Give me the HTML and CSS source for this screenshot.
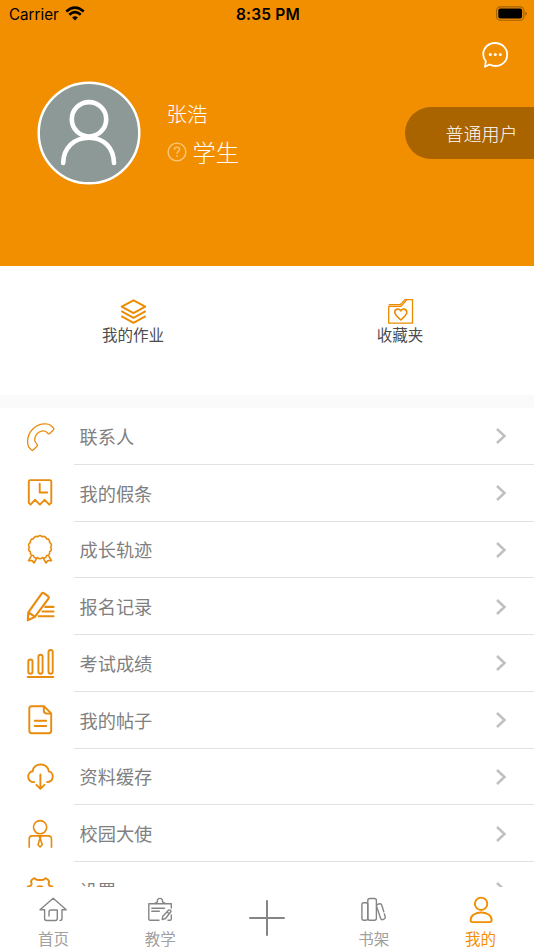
FILE: index.html
```html
<!DOCTYPE html>
<html lang="zh-CN">
<head>
<meta charset="utf-8">
<title>我的</title>
<link rel="stylesheet" href="styles.css">
</head>
<body>
<svg class="defs" width="0" height="0"><symbol id="chevron" viewBox="0 0 12 18"><path d="M2 2 9.500 9 2 16"/></symbol></svg>
<div class="screen">
  <header class="hero">
    <div class="status">
      <div class="carrier">Carrier
        <svg class="wifi" width="20" height="15" viewBox="0 0 20 15"><path d="M10 14.400 7.100 11.500Q10 8.900 12.900 11.500Z" fill="#000"/><path d="M4.300 8.800Q10 3.600 15.700 8.800M1.300 5.500Q10 -2.200 18.700 5.500" fill="none" stroke="#000" stroke-width="2.700"/></svg>
      </div>
      <div class="clock">8:35 PM</div>
      <svg class="battery" width="32" height="16" viewBox="0 0 32 16"><rect x=".6" y=".9" width="27.300" height="13.400" rx="3.800" fill="none" stroke="#a06000" stroke-width="1.100"/><rect x="2.300" y="2.600" width="23.800" height="10" rx="2" fill="#000"/><path d="M29.300 5.200q3 2.400 0 4.800z" fill="#a06000"/></svg>
    </div>
    <div class="tools">
      <svg width="28" height="28" viewBox="0 0 28 28" fill="none" stroke="#fff" stroke-width="1.800" stroke-linejoin="round"><path d="M4.800 20.300C-1.200 12.200 4.300 2 14 2c7 0 12.200 5.300 12.200 11.600C26.200 22.500 17 27.600 8.500 23.500L4 25.800Z"/><g fill="#fff" stroke="none"><circle cx="9.300" cy="13.500" r="1.500"/><circle cx="14.300" cy="13.500" r="1.500"/><circle cx="19.300" cy="13.500" r="1.500"/></g></svg>
    </div>
    <div class="profile">
      <svg class="avatar" width="104" height="104" viewBox="0 0 104 104"><circle cx="52" cy="52" r="50.300" fill="#8c9996" stroke="#fff" stroke-width="2.500"/><g fill="none" stroke="#fff" stroke-width="4.600" stroke-linecap="round"><circle cx="52" cy="38.300" r="17.200"/><path d="M26.200 82C26.500 67 37 56.700 52 56.700S76.500 67 77 82"/></g></svg>
      <div class="who">
        <div class="name">张浩</div>
        <div class="role">
          <svg width="20" height="20" viewBox="0 0 20 20" fill="none" stroke="#fbc779" stroke-width="1.400"><circle cx="10" cy="10" r="8.900"/><path d="M7.400 7.800C7.400 4.200 12.800 4.400 12.500 7.600C12.400 9.300 10 9.500 10 11.800M10 13.300v1.700"/></svg>
          <span>学生</span>
        </div>
      </div>
      <div class="level">普通用户</div>
    </div>
  </header>

  <section class="shortcuts">
    <div class="shortcut">
      <svg width="28" height="28" viewBox="0 0 28 28" fill="none" stroke="#ed8b00" stroke-width="1.900" stroke-linejoin="round"><path d="M14 2.300 25.800 8.700 14 15.100 2.200 8.700ZM1.800 13.200 14 19.800 26.200 13.200M1.800 18.200 14 24.900 26.200 18.200"/></svg>
      <span>我的作业</span>
    </div>
    <div class="shortcut">
      <svg width="28" height="28" viewBox="0 0 28 28" fill="none" stroke="#ed8b00" stroke-width="1.300" stroke-linejoin="round"><path d="M2.200 8.300H14.500L20.500 1.600H26V25.200H2.200ZM2.200 6.600H13.700L18.500 1.600H20.500"/><path d="M14.300 22C11 19.200 8.300 16.700 8.300 14.300C8.300 10.500 12.800 10 14.300 13C15.800 10 20.300 10.500 20.300 14.300C20.300 16.700 17.600 19.200 14.300 22Z" stroke-width="1.600"/></svg>
      <span>收藏夹</span>
    </div>
  </section>

  <main class="list">
    <div class="row"><svg class="icon thin" viewBox="0 0 32 32"><path d="M3.600 20.500C4 11.500 12 3.500 21.500 3.900Q25 4 26.500 5.200L29.700 8.300Q30.200 9 29.300 10L26 13.300Q25 14.300 24 13.500C22.300 11.300 20 10.500 17.500 11.100C13.500 12 10.600 15.800 10.700 20Q10.700 22.300 13 24.200Q14 25.300 13 26.300L9.200 30Q8.300 31 7.300 29.900L4.500 26.800Q3.500 25 3.600 20.500Z"/></svg><div class="cell">联系人<svg class="chevron"><use href="#chevron"/></svg></div></div>
    <div class="row"><svg class="icon" viewBox="0 0 32 32"><path d="M6.200 4.100H25.800Q27.300 4.100 27.300 5.600V26.800L25.300 28.600 20.600 23.800 15.900 28.600 11 23.800 6.500 28.600 4.800 26.800V5.600Q4.800 4.100 6.200 4.100ZM15.700 7.700V16.500H23.200"/></svg><div class="cell">我的假条<svg class="chevron"><use href="#chevron"/></svg></div></div>
    <div class="row"><svg class="icon medium" viewBox="0 0 32 32"><path d="M13.640 3.870A2.800 2.800 0 0 1 18.360 3.870A2.800 2.800 0 0 1 22.610 5.910A2.800 2.800 0 0 1 25.550 9.600A2.800 2.800 0 0 1 26.600 14.200A2.800 2.800 0 0 1 25.550 18.800A2.800 2.800 0 0 1 22.610 22.490A2.800 2.800 0 0 1 18.360 24.530A2.800 2.800 0 0 1 13.640 24.530A2.800 2.800 0 0 1 9.390 22.490A2.800 2.800 0 0 1 6.450 18.800A2.800 2.800 0 0 1 5.400 14.200A2.800 2.800 0 0 1 6.450 9.600A2.800 2.800 0 0 1 9.390 5.910A2.800 2.800 0 0 1 13.640 3.870Z"/><path d="M7 23.500 4.500 27.600 8 27.600 10 30 12.300 25.800M25 23.500 27.500 27.600 24 27.600 22 30 19.700 25.800"/></svg><div class="cell">成长轨迹<svg class="chevron"><use href="#chevron"/></svg></div></div>
    <div class="row"><svg class="icon bold" viewBox="0 0 32 32"><path d="M17.500 3.800Q18.600 2.300 20.200 3.400L23.900 6.100Q25.500 7.200 24.400 8.700L10.900 26.900 3.800 30.200 4.300 22.300ZM4.500 22.300 10.700 26.700M21.300 16.900H29.500M18.500 21.500H29.500M14.800 26.200H29.500"/></svg><div class="cell">报名记录<svg class="chevron"><use href="#chevron"/></svg></div></div>
    <div class="row"><svg class="icon" viewBox="0 0 32 32"><rect x="4.300" y="12.500" width="4.200" height="14.300" rx="2.100"/><rect x="14.400" y="7.800" width="4.200" height="19" rx="2.100"/><rect x="24.500" y="3" width="4.200" height="23.800" rx="2.100"/><path d="M3.700 30H29.300"/></svg><div class="cell">考试成绩<svg class="chevron"><use href="#chevron"/></svg></div></div>
    <div class="row"><svg class="icon" viewBox="0 0 32 32"><path d="M7.800 3.200H20L27.200 10.500V27.800Q27.200 30.200 24.800 30.200H7.800Q5.300 30.200 5.300 27.800V5.600Q5.300 3.200 7.800 3.200ZM19.800 3.200V7.500Q19.800 10.600 23 10.600H27.200M10.700 17.700H22.200M10.700 23H22.200"/></svg><div class="cell">我的帖子<svg class="chevron"><use href="#chevron"/></svg></div></div>
    <div class="row"><svg class="icon" viewBox="0 0 32 32"><path d="M10.300 22.100C2.500 22.100 2.500 12 8.700 11.300C8.800 2.300 24.500 2.300 24.700 11.300C30.700 12.500 30 22.100 23 22.100M16.400 14.500V28.500M12.400 24.800 16.400 28.800 20.400 24.800"/></svg><div class="cell">资料缓存<svg class="chevron"><use href="#chevron"/></svg></div></div>
    <div class="row"><svg class="icon medium" viewBox="0 0 32 32"><circle cx="16.100" cy="10.200" r="6.600"/><path d="M5.200 30.200V22Q5.200 18.900 8.300 18.900H24.500Q27.500 18.900 27.500 22V30.200M14.800 19 16.100 21 17.400 19M16.100 21 14 27.700 16.100 30 18.200 27.700Z"/></svg><div class="cell">校园大使<svg class="chevron"><use href="#chevron"/></svg></div></div>
    <div class="row"><svg class="icon" viewBox="0 0 32 32"><path d="M3.700 12.700C7.500 12 8.300 10.300 7 7.600Q7.300 5.300 10.700 4.200C12.300 6.700 14.500 6 16.100 5.900C18 6 19.900 6.700 21.400 4.200Q24.500 5.300 25.200 7.600C24 10.300 24.700 12 28.500 12.700V20Q25 23 25.200 27H7Q7 23 3.700 20Z"/><circle cx="16" cy="17.300" r="5"/></svg><div class="cell">设置<svg class="chevron"><use href="#chevron"/></svg></div></div>
  </main>

  <nav class="tabs">
    <div class="tab"><svg viewBox="0 0 32 32"><path d="M7.600 16.800H3L16.200 5.200 29.200 16.800H25V25.500Q25 27.400 23 27.400M7.600 16.800V25.600Q7.600 27.500 9.500 27.500H18.400Q20.300 27.500 20.300 25.600V17H13.800Q12 17 12 18.800V23"/></svg><span>首页</span></div>
    <div class="tab"><svg viewBox="0 0 32 32"><path d="M15 27.300H6Q4.800 27.300 4.800 26V10.800H27.300V15M27.300 22V26Q27.300 27.300 26 27.300H24M10.500 10.500 13.500 8.800A2.600 2.600 0 1 1 18.400 8.800L21.500 10.500M7.800 15.200H20.500M7.800 18.300H15.300M18.200 26.600 18.800 23.200 24.500 17.200Q26.700 16.200 27 18.500L21.500 25.500ZM23 19 25.200 20.800"/></svg><span>教学</span></div>
    <div class="tab plus"><svg viewBox="0 0 36 36"><path d="M18 1V35M1 18H35"/></svg></div>
    <div class="tab"><svg viewBox="0 0 32 32"><rect x="3.900" y="9.700" width="5.900" height="17.500" rx="2"/><rect x="9.800" y="5.500" width="8.600" height="21.700" rx="2"/><path d="M18.500 13.100Q18.300 11.700 19.700 11.300L21.800 10.800Q23.200 10.500 23.700 12L25.800 18.800M26.400 21 27.200 23.700Q27.500 25.500 26 26.100L24.800 26.600Q23.200 27 22.600 25.300L18.500 13.100"/></svg><span>书架</span></div>
    <div class="tab active"><svg viewBox="0 0 32 32"><circle cx="16.100" cy="10.800" r="6.200"/><path d="M16.200 19.500C21.800 19.500 26.700 22.500 26.700 27Q26.700 29.100 24.800 29.100H7.500Q5.600 29.100 5.600 27C5.600 22.500 10.600 19.500 16.200 19.500Z"/></svg><span>我的</span></div>
  </nav>
</div>
</body>
</html>
```

FILE: styles.css
```css
* { box-sizing: border-box; }
body {
  margin: 0;
  font-family: "Noto Sans CJK SC", sans-serif;
  font-weight: 400;
  background: #fff;
}
svg { display: block; flex: none; }
.defs { display: none; }
.screen {
  width: 534px;
  height: 950px;
  overflow: hidden;
  display: flex;
  flex-direction: column;
}
.hero {
  flex: none;
  height: 266px;
  background: #f28f00;
  color: #fff;
}
.status {
  height: 28px;
  padding: 0 7px 0 9px;
  display: grid;
  grid-template-columns: 1fr auto 1fr;
  align-items: center;
  color: #000;
  font: 400 15.200px/29px Inter, sans-serif;
}
.carrier { display: flex; align-items: center; gap: 6px; }
.wifi { margin-top: -3px; }
.clock { font-size: 15.500px; font-weight: 600; letter-spacing: 0.200px; }
.battery { justify-self: end; margin-top: -2px; margin-right: -1px; }
.tools {
  height: 53px;
  padding: 13px 25px 0 0;
  display: flex;
  justify-content: flex-end;
}
.profile {
  height: 104px;
  padding-left: 37px;
  display: flex;
}
.who { margin-left: 25.500px; padding-top: 16px; flex: 1; font-weight: 300; }
.name { font-size: 20.500px; line-height: 33px; }
.role { display: flex; align-items: center; font-size: 23.300px; line-height: 44px; gap: 6px; }
.level {
  align-self: center;
  width: 129px;
  height: 52px;
  padding-left: 40.500px;
  border-radius: 26px 0 0 26px;
  background: #a96400;
  font-size: 18px;
  line-height: 52px;
  font-weight: 300;
}
.shortcuts {
  flex: none;
  height: 129px;
  padding-top: 31.500px;
  display: grid;
  grid-template-columns: 1fr 1fr;
}
.shortcut {
  display: flex;
  flex-direction: column;
  align-items: center;
  font-size: 15.500px;
  line-height: 17px;
  color: #4c4c4c;
  transform: translateX(-0.500px);
}
.list {
  flex: 1;
  min-height: 0;
  overflow: hidden;
  border-top: 13px solid #fafafa;
}
.row { height: 56.750px; padding-left: 24px; display: flex; }
.icon {
  width: 32px;
  height: 32px;
  margin-top: 11.600px;
  fill: none;
  stroke: #e98b0c;
  stroke-width: 1.900;
  stroke-linecap: round;
  stroke-linejoin: round;
}
.icon.thin { stroke-width: 1.300; }
.icon.medium { stroke-width: 1.600; }
.icon.bold { stroke-width: 2.100; }
.cell {
  flex: 1;
  margin-left: 18px;
  padding: 0 27px 0 5.500px;
  border-bottom: 1px solid #e2e2e2;
  display: flex;
  align-items: center;
  justify-content: space-between;
  font-size: 18.200px;
  color: #808080;
}
.chevron {
  width: 12px;
  height: 18px;
  margin-top: 1px;
  fill: none;
  stroke: #c0c0c0;
  stroke-width: 2.500;
}
.tabs {
  flex: none;
  height: 63.500px;
  display: grid;
  grid-template-columns: repeat(5, 1fr);
  background: #fff;
}
.tab {
  padding-top: 6.500px;
  display: flex;
  flex-direction: column;
  align-items: center;
  color: #a0a0a0;
  font-size: 15.500px;
  line-height: 26px;
}
.tab svg {
  width: 32px;
  height: 32px;
  fill: none;
  stroke: #858585;
  stroke-width: 1.400;
  stroke-linecap: round;
  stroke-linejoin: round;
}
.tab.plus { padding-top: 13.500px; }
.tab.plus svg { width: 36px; height: 36px; stroke-width: 2; }
.tab.active { color: #f28f00; }
.tab.active svg { stroke: #f28f00; stroke-width: 1.900; }
```
